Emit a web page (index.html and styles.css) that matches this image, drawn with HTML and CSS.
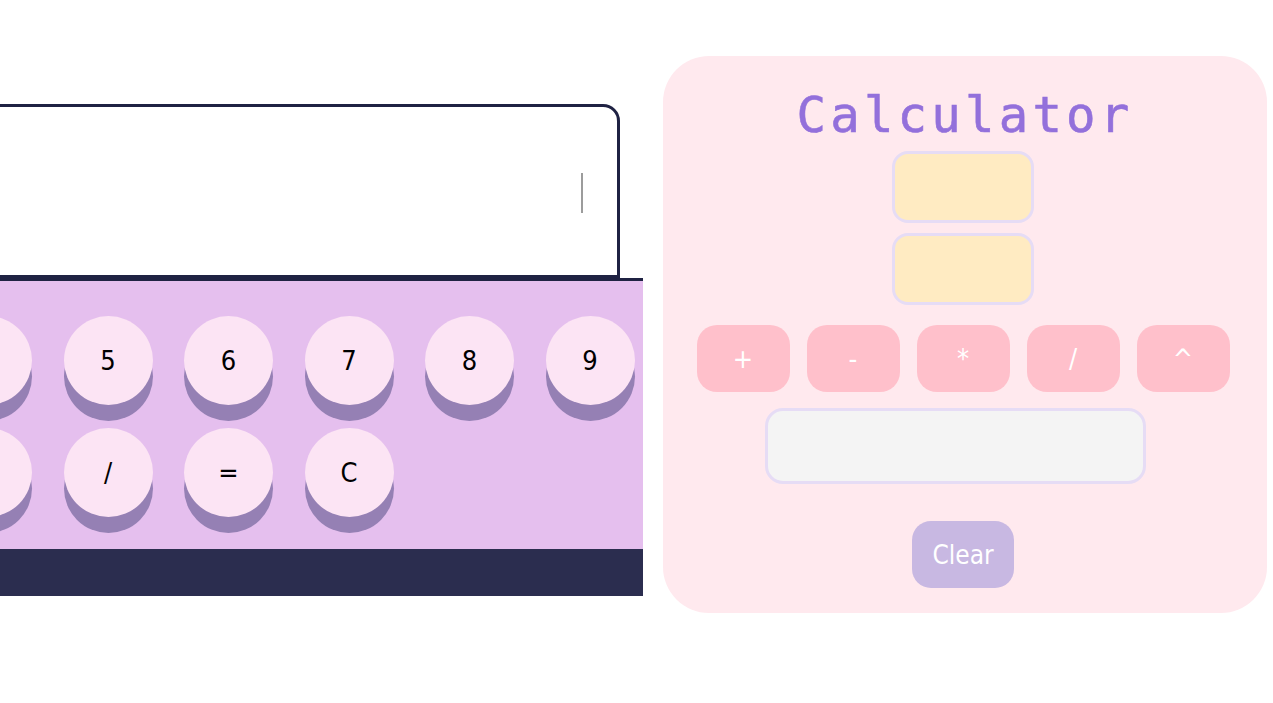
FILE: index.html
```html
<!DOCTYPE html>
<html lang="en">
<head>
<meta charset="utf-8">
<title>Calculator</title>
<link rel="stylesheet" href="styles.css">
</head>
<body>
<main class="page">
  <section class="machine">
    <div class="screen"><span class="caret"></span></div>
    <div class="keypad">
      <button class="key">1</button>
      <button class="key">2</button>
      <button class="key">3</button>
      <button class="key">4</button>
      <button class="key">5</button>
      <button class="key">6</button>
      <button class="key">7</button>
      <button class="key">8</button>
      <button class="key">9</button>
      <button class="key">0</button>
      <button class="key">+</button>
      <button class="key">-</button>
      <button class="key">*</button>
      <button class="key">/</button>
      <button class="key">=</button>
      <button class="key">C</button>
    </div>
    <div class="base"></div>
  </section>
  <section class="card">
    <h1 class="title">Calculator</h1>
    <div class="num-input"></div>
    <div class="num-input second"></div>
    <div class="ops">
      <button class="op">+</button>
      <button class="op">-</button>
      <button class="op">*</button>
      <button class="op">/</button>
      <button class="op">^</button>
    </div>
    <div class="result"></div>
    <button class="clear">Clear</button>
  </section>
</main>
</body>
</html>
```
FILE: styles.css
```css
html, body {
  margin: 0;
  padding: 0;
  background: #ffffff;
  overflow: hidden;
}

.page {
  display: flex;
  align-items: flex-start;
  gap: 20px;
  padding-top: 56px;
  width: 1273px;
  height: 703px;
  box-sizing: border-box;
}

.machine {
  flex-shrink: 0;
  width: 1070px;
  margin-left: -427px;
  margin-top: 48px;
  display: flex;
  flex-direction: column;
}

.screen {
  height: 174px;
  margin-right: 23px;
  box-sizing: border-box;
  border: 3px solid #1f2243;
  border-radius: 17px 17px 0 0;
  background: #ffffff;
  display: flex;
  align-items: center;
  justify-content: flex-end;
  padding-right: 34px;
}

.caret {
  width: 2px;
  height: 40px;
  margin-top: 4px;
  background: #9c9c9c;
}

.keypad {
  background: #e5bfee;
  border-top: 3px solid #1f2243;
  padding: 35px 8.5px 32px;
  display: grid;
  grid-template-columns: repeat(9, 89px);
  column-gap: 31.5px;
  row-gap: 23px;
}

.key {
  width: 89px;
  height: 89px;
  border: none;
  border-radius: 50%;
  background: #fce4f4;
  box-shadow: 0 16px 0 #9580b4;
  color: #000000;
  font-family: "DejaVu Sans Condensed", "DejaVu Sans", sans-serif;
  font-size: 27px;
  padding: 0;
  display: flex;
  align-items: center;
  justify-content: center;
}

.base {
  height: 47px;
  background: #2b2d4f;
}

.card {
  flex-shrink: 0;
  width: 604px;
  height: 557px;
  box-sizing: border-box;
  background: #ffe9ee;
  border-radius: 46px;
  padding: 32px 36px 25px 32px;
  display: flex;
  flex-direction: column;
  align-items: center;
}

.title {
  margin: 0;
  font-family: "DejaVu Sans Mono", monospace;
  font-weight: normal;
  font-size: 49px;
  line-height: 56px;
  letter-spacing: 4.2px;
  margin-right: -4px;
  color: #9370db;
  -webkit-text-stroke: 0.6px #9370db;
}

.num-input {
  width: 142px;
  height: 72px;
  box-sizing: border-box;
  margin-top: 7px;
  background: #ffebc2;
  border: 3px solid #e6dcf5;
  border-radius: 16px;
}

.num-input.second {
  margin-top: 10px;
}

.ops {
  margin-top: 20px;
  display: flex;
  gap: 17px;
}

.op {
  width: 93px;
  height: 67px;
  border: none;
  border-radius: 20px;
  background: #ffc0cb;
  color: #ffffff;
  font-family: "DejaVu Sans Condensed", "DejaVu Sans", sans-serif;
  font-size: 27px;
  padding: 0;
}

.result {
  width: 381px;
  height: 76px;
  box-sizing: border-box;
  margin-top: 16px;
  margin-right: 15px;
  background: #f4f4f4;
  border: 3px solid #e6dcf5;
  border-radius: 18px;
}

.clear {
  margin-top: 37px;
  width: 102px;
  height: 67px;
  border: none;
  border-radius: 19px;
  background: #c8b8e2;
  color: #ffffff;
  font-family: "DejaVu Sans Condensed", "DejaVu Sans", sans-serif;
  font-size: 26px;
  padding: 0;
}
```
